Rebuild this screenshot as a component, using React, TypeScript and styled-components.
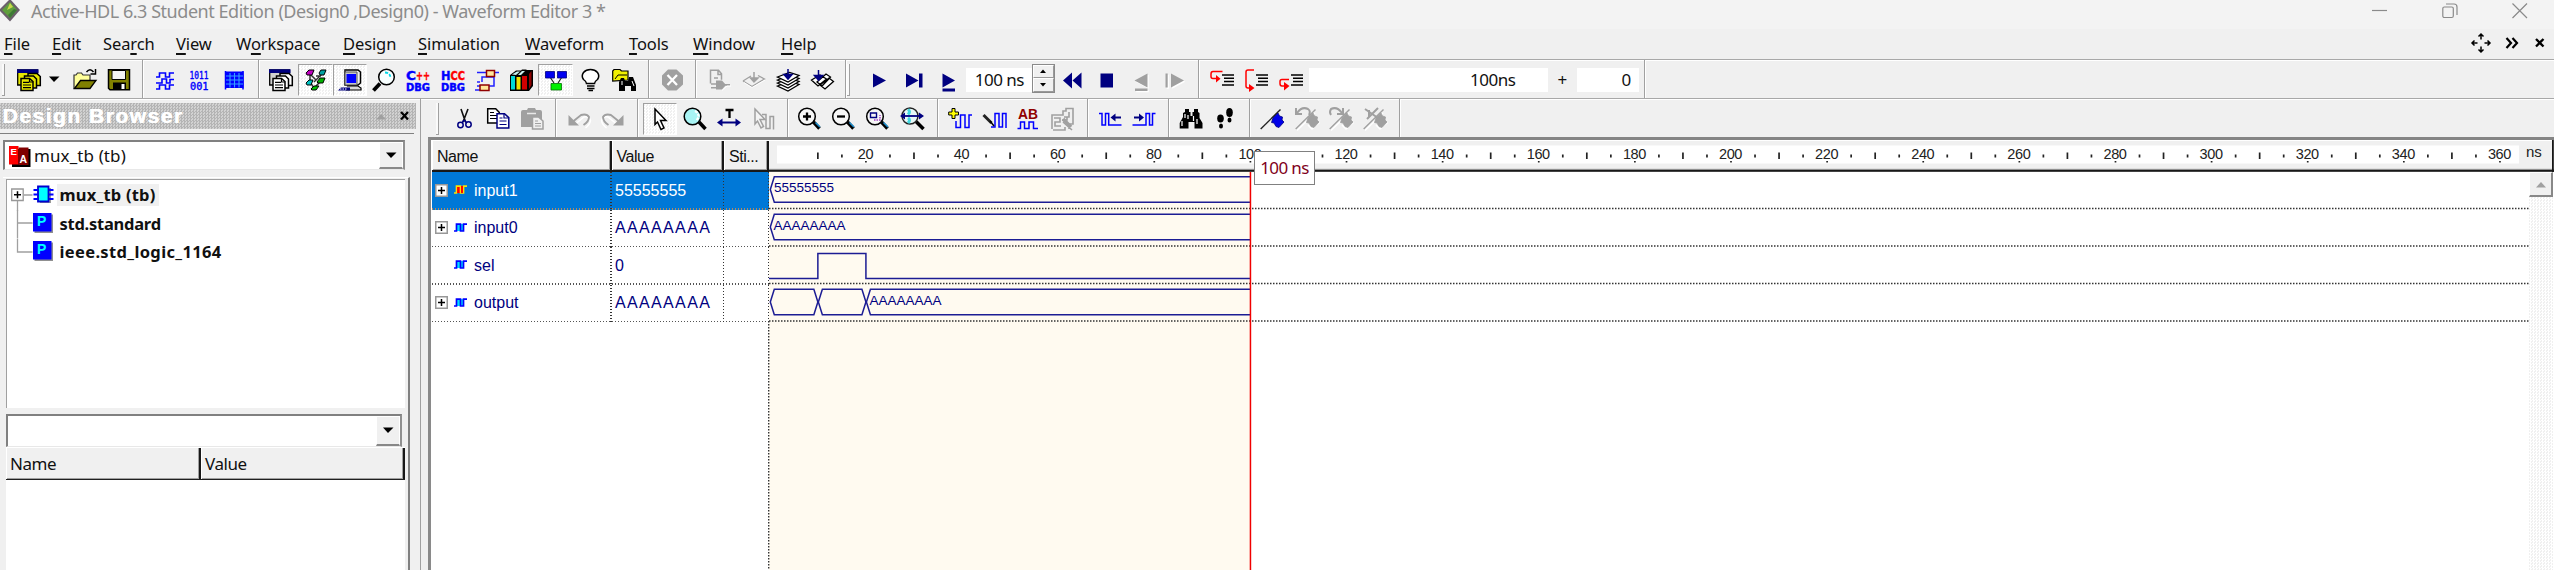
import React from "react";
import styled, { createGlobalStyle, css } from "styled-components";

const UI = `"Noto Sans", "Open Sans", sans-serif`;
const SANS = `"Liberation Sans", Arial, sans-serif`;
const NAVY = "#000080";
const WAVE = "#1c1c94";
const GRAY = "#a0a0a0";

const Global = createGlobalStyle`
  * { box-sizing: border-box; }
  body { margin: 0; background: #f0f0f0; overflow: hidden; }
  svg { display: block; flex: none; overflow: visible; }
`;

const Window = styled.div`
  width: 2554px;
  height: 570px;
  display: flex;
  flex-direction: column;
  background: #f0f0f0;
  font-family: ${UI};
  font-size: 17px;
  color: #111;
  overflow: hidden;
  white-space: pre;
`;

const TitleBar = styled.header`
  height: 29px;
  flex: none;
  display: flex;
  align-items: flex-start;
  background: #f3f3f3;
`;
const TitleText = styled.div`
  margin-left: 11px;
  flex: 1;
  line-height: 23px;
  font-size: 18px;
  letter-spacing: -0.46px;
  color: #8c8c8c;
`;
const WindowControls = styled.div`
  display: flex;
  gap: 54px;
  padding: 3px 26px 0 0;
`;

const MenuBar = styled.nav`
  height: 30px;
  flex: none;
  display: flex;
  padding-left: 4px;
`;
const MenuItem = styled.div<{ $w: number }>`
  width: ${(p) => p.$w}px;
  line-height: 29px;
  font-size: 16.5px;
  letter-spacing: -0.1px;
  u { text-underline-offset: 3px; text-decoration-thickness: 1.5px; }
`;
const MenuControls = styled.div`
  flex: 1;
  display: flex;
  justify-content: flex-end;
  align-items: flex-start;
  padding: 4px 7px 0 0;
  gap: 14px;
`;

const ToolBar = styled.div<{ $left: number }>`
  height: 39px;
  flex: none;
  display: flex;
  align-items: stretch;
  padding-left: ${(p) => p.$left}px;
  border-top: 1.5px solid #a8a8a8;
  box-shadow: inset 0 1px #fff;
`;
const Gripper = styled.i<{ $gap: number }>`
  width: 3px;
  flex: none;
  margin: 4px ${(p) => p.$gap}px 2px 0;
  border-right: 1.5px solid #a0a0a0;
  border-bottom: 1.5px solid #a0a0a0;
  background: #fafafa;
`;
const Group = styled.div<{ $pl?: number }>`
  display: flex;
  align-items: center;
  padding: 1px ${(p) => 10.8 - (p.$pl ?? 5.4)}px 0 ${(p) => p.$pl ?? 5.4}px;
  border-right: 1px solid #a0a0a0;
  box-shadow: 1px 0 #fff;
  margin-right: 1px;
`;
const dither = css`
  background: repeating-conic-gradient(#fff 0 25%, #f0f0f0 0 50%) 0 0 / 3px 3px;
`;
const ToolButton = styled.div<{ $pressed?: boolean; $w?: number }>`
  width: ${(p) => p.$w ?? 34.3}px;
  height: 32px;
  flex: none;
  display: flex;
  align-items: center;
  justify-content: center;
  ${(p) =>
    p.$pressed &&
    css`
      ${dither}
      border: 1.5px solid #fff;
      border-top-color: #a0a0a0;
      border-left-color: #a0a0a0;
    `}
`;
const Field = styled.div<{ $w: number; $pr: number; $ml?: number }>`
  width: ${(p) => p.$w}px;
  height: 24px;
  margin-left: ${(p) => p.$ml ?? 0}px;
  padding-right: ${(p) => p.$pr}px;
  background: #fff;
  text-align: right;
  line-height: 24px;
  font-size: 17px;
  letter-spacing: -0.5px;
`;
const Plus = styled.span`
  width: 29px;
  text-align: center;
  font-size: 17px;
`;
const Spin = styled.div`
  width: 23px;
  height: 29px;
  margin-top: -3px;
  border: 1.5px solid #8a8a8a;
  display: flex;
  flex-direction: column;
`;
const SpinHalf = styled.div`
  flex: 1;
  display: flex;
  align-items: center;
  justify-content: center;
  border: 1px solid #fff;
  border-right: 1.5px solid #999;
  border-bottom: 1.5px solid #999;
`;

const Body = styled.main`
  flex: 1;
  min-height: 0;
  display: flex;
`;
const Browser = styled.aside`
  width: 420px;
  flex: none;
  display: flex;
  flex-direction: column;
  border-top: 1.5px solid #a8a8a8;
  box-shadow: inset 0 1px #fff;
`;
const BrowserTitle = styled.div`
  height: 26px;
  margin-top: 4px;
  width: 416px;
  display: flex;
  align-items: center;
  padding: 0 5px 0 2.5px;
  background: repeating-conic-gradient(#b4b4b4 0 25%, #d2d2d2 0 50%) 0 0 / 3px 3px;
  font: bold 21px/26px ${SANS};
  letter-spacing: 1.5px;
  color: #fff;
`;
const BrowserTitleText = styled.span`
  flex: 1;
  text-shadow: 0.6px 0 #fff;
`;
const BrowserBody = styled.div`
  width: 414px;
  flex: 1;
  min-height: 0;
  display: flex;
  flex-direction: column;
  margin-top: 4px;
  padding: 6px 4px 0 3px;
  border-top: 1.5px solid #808080;
`;
const Combo = styled.div<{ $w: number; $h: number; $mt?: number }>`
  width: ${(p) => p.$w}px;
  height: ${(p) => p.$h}px;
  margin-top: ${(p) => p.$mt ?? 0}px;
  flex: none;
  display: flex;
  align-items: center;
  padding-left: 4px;
  background: #fff;
  border: 2.5px solid #808080;
  border-bottom: 1px solid #e8e8e8;
  border-right: 2px solid #909090;
`;
const ComboText = styled.span`
  flex: 1;
  padding-left: 3px;
  font-size: 17px;
  letter-spacing: 0.1px;
`;
const ComboButton = styled.div`
  width: 24px;
  align-self: stretch;
  display: flex;
  align-items: center;
  justify-content: center;
  background: #f0f0f0;
  border: 1px solid #fff;
  border-bottom: 2px solid #888;
`;
const Well = styled.div`
  margin-top: 7px;
  flex: 1;
  min-height: 0;
  width: 407px;
  padding-left: 3px;
  border-right: 2.5px solid #808080;
  border-top: 1px solid #fff;
`;
const Tree = styled.div`
  width: 399px;
  height: 229px;
  display: flex;
  flex-direction: column;
  background: #fff;
  border-top: 1.5px solid #a0a0a0;
  border-left: 1.5px solid #a0a0a0;
  padding: 2px 0 0 3px;
  margin-top: 1px;
`;
const TreeRow = styled.div`
  height: 28.4px;
  display: flex;
  align-items: center;
`;
const TreeLabel = styled.span<{ $selected?: boolean; $ls: number }>`
  height: 22px;
  margin: -2px 0 0 2.5px;
  padding: 0 3px;
  line-height: 22px;
  font-weight: bold;
  font-size: 16.5px;
  letter-spacing: ${(p) => p.$ls}px;
  background: ${(p) => (p.$selected ? "#f0f0f0" : "transparent")};
`;
const HeaderRow = styled.div`
  width: 399px;
  height: 33px;
  display: flex;
  border-bottom: 1.5px solid #202020;
  border-top: 1px solid #fff;
`;
const HeaderCell = styled.div<{ $w?: number; $sans?: boolean }>`
  ${(p) => (p.$w ? `width: ${p.$w}px;` : "flex: 1;")}
  padding-left: ${(p) => (p.$sans ? 4 : 3)}px;
  line-height: ${(p) => (p.$sans ? 31 : 32)}px;
  font-family: ${(p) => (p.$sans ? SANS : UI)};
  font-size: ${(p) => (p.$sans ? 16 : 17)}px;
  letter-spacing: -0.45px;
  background: #f0f0f0;
  border-right: 2px solid #181818;
  border-left: 1px solid #fff;
  box-shadow: inset -1px -1px #a0a0a0;
`;
const EmptyList = styled.div`
  width: 399px;
  height: 100px;
  background: #fff;
`;

const Main = styled.section`
  flex: 1;
  min-width: 0;
  display: flex;
  flex-direction: column;
  border-left: 1.5px solid #a0a0a0;
`;
const Document = styled.div`
  flex: 1;
  min-height: 0;
  margin-left: 7px;
  display: flex;
  border-left: 3px solid #8a8a8a;
  border-top: 3px solid #858585;
  background: #fff;
`;
const SignalTable = styled.div`
  width: 337px;
  margin-left: 1px;
  flex: none;
`;
const TableHead = styled.div`
  height: 32px;
  display: flex;
  border-top: 1px solid #fff;
  border-bottom: 2px solid #181818;
`;
const SignalRow = styled.div<{ $selected?: boolean }>`
  height: 37.5px;
  display: flex;
  font: 16px/35px ${SANS};
  color: ${(p) => (p.$selected ? "#fff" : NAVY)};
  background:
    linear-gradient(90deg, ${(p) => (p.$selected ? "#b08860" : "#555")} 50%, transparent 50%)
      0 100% / 3px 1.5px repeat-x,
    ${(p) => (p.$selected ? "#0078d7" : "#fff")};
`;
const Cell = styled.div<{ $w: number; $ls?: number; $pl?: number }>`
  width: ${(p) => p.$w}px;
  flex: none;
  display: flex;
  align-items: center;
  padding-left: ${(p) => p.$pl ?? 3}px;
  padding-bottom: 1.5px;
  letter-spacing: ${(p) => p.$ls ?? 0}px;
  background: linear-gradient(#333 50%, transparent 50%) 100% 0 / 1.5px 3px repeat-y;
`;
const Expander = styled.span<{ $hidden?: boolean }>`
  width: 13px;
  height: 13px;
  margin-right: 6px;
  visibility: ${(p) => (p.$hidden ? "hidden" : "visible")};
`;
const SignalName = styled.span`
  margin-left: 7px;
`;

const Chart = styled.div`
  flex: 1;
  min-width: 0;
  display: flex;
  flex-direction: column;
`;
const ChartBody = styled.div`
  flex: 1;
  min-height: 0;
  display: flex;
`;
const ScrollBar = styled.div`
  width: 24px;
  ${dither}
`;
const ScrollButton = styled.div`
  height: 25px;
  display: flex;
  align-items: center;
  justify-content: center;
  background: #f0f0f0;
  border: 1px solid #fff;
  border-right: 2px solid #888;
  border-bottom: 2px solid #888;
`;
const Tooltip = styled.div`
  position: absolute;
  left: 1254px;
  top: 151px;
  width: 61px;
  height: 34px;
  border: 1.5px solid #808080;
  background: #fff;
  color: #800020;
  font-size: 17px;
  line-height: 32px;
  text-align: center;
  letter-spacing: -0.6px;
`;

/* ---------- icons ---------- */
type Kids = { children?: React.ReactNode };
const Svg = ({ children, w = 24, h = 24 }: Kids & { w?: number; h?: number }) => (
  <svg width={w} height={h} viewBox={`0 0 ${w} ${h}`} fill="none" stroke="none" strokeWidth="1.5">
    {children}
  </svg>
);

const PageStack = ({ page, back }: { page: string; back: string }) => (
  <Svg>
    <path d="M.7 2H20.500V17H.7z" fill={back} stroke="#000" strokeWidth="1.3" />
    <path d="M0 1.300H21.500V5H0z" fill={NAVY} />
    <path d="M11 5.500h9l3.300 3v9H11z" fill={page} stroke="#000" />
    <path d="M7.500 8h9l3 3v9h-12z" fill={page} stroke="#000" />
    <path d="M4 10.500h8.500l3.500 3v9H4z" fill={page} stroke="#000" />
    <path d="M6 14.300h6M6 17h8M6 19.600h8M12.500 11v3H16" stroke="#000" strokeWidth="1.2" />
  </Svg>
);
const Open = () => (
  <Svg>
    <path d="M1 21V7h2l1.500-2h4L10 7h7v6" fill="#ffff9a" stroke="#333" strokeWidth="1.2" />
    <path d="M1.500 20.500L7.500 12.500H23L17 20.500z" fill="#808000" stroke="#000" strokeWidth="1.3" />
    <path d="M13.500 4Q17-.5 20.500 4M22.500 1v5h-5" stroke="#000" strokeWidth="1.5" />
  </Svg>
);
const Save = () => (
  <Svg>
    <path d="M1.500 1.800h21v20H3l-1.500-1.500z" fill="#808000" stroke="#000" strokeWidth="1.500" />
    <path d="M5 2.500h13.500v9H5z" fill="#f4f4f4" stroke="#000" strokeWidth="1" />
    <path d="M6 14.500h13V22H6z" fill="#000" />
    <path d="M14.500 16H17.500v5h-3z" fill="#fff" />
  </Svg>
);
const Waves = () => (
  <Svg>
    {[9, 15, 21].map((y, i) => (
      <path
        key={y}
        d={i === 1 ? `M3 ${y}h6v-4h4.500v4h3.500v-3.500h4` : `M3 ${y}h3.500v-4h6v4h4v-4h4.500`}
        stroke="#0000ff"
        strokeWidth="1.600"
      />
    ))}
  </Svg>
);
const Bits = () => (
  <Svg>
    <g fill="#0000ff" stroke="#0000ff" strokeWidth=".4" fontFamily="DejaVu Sans Mono" fontSize="10.500">
      <text x="2.500" y="11" textLength="19" lengthAdjust="spacingAndGlyphs">1011</text>
      <text x="3" y="21.500" textLength="18.500" lengthAdjust="spacingAndGlyphs">001</text>
    </g>
  </Svg>
);
const Grid = () => (
  <Svg>
    <path d="M3 3.500h18.500V20H3z" fill="#0000ff" />
    <path d="M3.500 3v18.500M21 3v18.500" stroke="#0000ff" />
    <path d="M8 5v14.500M12.500 5v14.500M17 5v14.500M4 8h17M4 12h17M4 16h17" stroke="#35a0ff" strokeWidth="1.100" />
  </Svg>
);
const Hierarchy = () => (
  <Svg>
    <path d="M6 6L12 12M18 6L10 14M6 6v8M12 8h5M17 13L10 20M6 14l4 6" stroke="#333" />
    <g stroke="#000" strokeWidth="1">
      <path d="M2 5l3-3h5L8 7H3z" fill="#c000c0" />
      <path d="M15 5l2-3h5l-2 5h-4z" fill="#00a0a0" />
      <path d="M2 15l3-3h4l-2 5H3z" fill="#00c0c0" />
      <path d="M13 14l3-4h5l-2 5h-5z" fill="#00b000" />
      <path d="M7 21l3-3h5l-3 4H8z" fill="#00c000" />
    </g>
  </Svg>
);
const Monitor = () => (
  <Svg>
    <path d="M7 2h13l2.500 2v11L20 17H7z" fill="#f0f0f0" stroke="#000" />
    <path d="M7 2v15h12V4H7" fill="#c8c8c8" stroke="#555" strokeWidth="1" />
    <path d="M8.500 6h9.500v9H8.500z" fill="#0000ff" />
    <path d="M9 18h11l3 2v2H8" fill="#d8d8d8" stroke="#000" strokeWidth="1.200" />
    <path d="M0 22.500l3-3h9v3z" fill={NAVY} />
    <path d="M2 21h7" stroke="#fff" strokeDasharray="1.500 1" strokeWidth="1" />
  </Svg>
);
const Magnifier = () => (
  <Svg>
    <path d="M1.500 22.500L8 15.500" stroke="#000" strokeWidth="3.800" />
    <circle cx="14.500" cy="9" r="7.800" fill="#f8ffff" stroke="#000" />
    <path d="M13 4.500q5 0 5.500 5" stroke="#00d8e8" strokeWidth="1.800" strokeDasharray="3 1.500" />
  </Svg>
);
const Dbg = ({ a, b, aw }: { a: string; b: string; aw: number }) => (
  <Svg>
    <g fontFamily="DejaVu Sans" fontWeight="bold">
      <text x="0" y="11.500" fontSize="12.500" fill="#0000ff" stroke="#0000ff" strokeWidth=".4" textLength={aw} lengthAdjust="spacingAndGlyphs">{a}</text>
      <text x={aw} y="11.500" fontSize="12.500" fill="#f00" stroke="#f00" strokeWidth=".4" textLength={24 - aw} lengthAdjust="spacingAndGlyphs">{b}</text>
      <text x="0" y="22.500" fontSize="11" fill="#0000ff" stroke="#0000ff" strokeWidth=".5" textLength="24" lengthAdjust="spacingAndGlyphs">DBG</text>
    </g>
  </Svg>
);
const Schematic = () => (
  <Svg>
    <path d="M2 4.500h22M15 9h4v9H2M2 14h3M15 9H7v5M0 22h7" stroke="#2020ff" />
    <path d="M11.500 2.500h8v6h-8zM5 17h9v5.500H5z" fill="#ffe79a" stroke="#900000" />
  </Svg>
);
const Books = () => (
  <Svg>
    <path d="M1 7l6-4.500h5l1-1h4l1 .500h6V18l-4 5H1z" fill="#000" />
    <path d="M2 8h4v13.500H2z" fill="#00d8d8" />
    <path d="M7.500 9h4v12.500h-4z" fill="#f0e000" />
    <path d="M13 8h5v13.500h-5z" fill="#d00000" />
    <path d="M20 6l2.500-3v14L20 21z" fill="#900000" />
    <path d="M3 6.500l5-3h3L7 7zM9 7l4-4h3l-4 4z" fill="#c8f0f0" />
  </Svg>
);
const Blocks = () => (
  <Svg>
    <path d="M6 9l4 6M18 9l-4 6" stroke="#222" strokeWidth="1.200" />
    <path d="M1.500 3.500h9V10h-9zM13.500 3.500h9V10h-9z" fill="#0000f0" stroke={NAVY} strokeWidth=".8" />
    <path d="M7 15.500h10.500v6.500H7z" fill="#00f000" stroke="#007000" strokeWidth=".8" />
  </Svg>
);
const Bulb = () => (
  <Svg>
    <path d="M8.500 15.500Q8.500 13.500 5.500 11.500 3 8 5.500 4.500 8 1.500 12.500 1.500T19.500 4.500Q22 8 19.500 11.500 16.500 13.500 16.500 15.500z" fill="#fff" stroke="#000" />
    <path d="M9 18h7.500M9 20.500h7.500M10.500 22.500h4.500" stroke="#000" />
  </Svg>
);
const FindFolder = () => (
  <Svg>
    <path d="M.7 13V3L2 1.500h6L9.500 3H16v9z" fill="#f0f000" stroke="#000" strokeWidth="1.200" />
    <path d="M3 11l3-4h9" stroke="#000" strokeWidth="1" />
    <path d="M7 23V14l2-4h3l1 3h3l1-4h4l3 8v6h-5v-5h-6v5z" fill="#000" />
    <path d="M10 13v4M20 13l2 5" stroke="#fff" strokeWidth="1" />
  </Svg>
);
const Cancel = () => (
  <Svg>
    <path d="M8 1.500h8.500l6.500 6v9l-6.500 6H8l-6-6v-9z" fill="#a0a0a0" />
    <path d="M7.500 7l9.500 10M17 7L7.500 17" stroke="#fff" strokeWidth="2.300" />
  </Svg>
);
const DocGate = () => (
  <Svg>
    <path d="M3.500 15.500V2.300h8l3 3.500v6M11 2v4.500h4M7 10h4" stroke={GRAY} />
    <path d="M9 12.500h6l4 4.500-4 4.500H9zM4 15.200h5v1.500H4zM4 19h5v1.500H4zM18 16h5v1.700h-5z" fill={GRAY} />
    <path d="M15 22.500l5-4.500h4" stroke="#fff" strokeWidth="1" />
  </Svg>
);
const GateGray = () => (
  <Svg>
    <path d="M1 13l8-5M1 13l9 5.500L22.500 11 16 7.500" stroke={GRAY} strokeWidth="1.300" />
    <path d="M2 14.500l8 5 13-7.500" stroke="#fff" strokeWidth="1" />
    <path d="M12 4v8M8.500 10l3.500 4 4-4z" stroke={GRAY} fill={GRAY} />
  </Svg>
);
const Layers = () => (
  <Svg>
    {[18, 15, 12, 9].map((y) => (
      <path key={y} d={`M1.500 ${y}l12-4.500 9.500 3-11 6.500z`} fill="#fff" stroke="#000" strokeWidth="1.300" />
    ))}
    <path d="M12 1v9M8 6.500h8L12 11z" fill={NAVY} stroke={NAVY} />
  </Svg>
);
const Layers2 = () => (
  <Svg>
    <path d="M10 17l9-7 4.500 3.500L15 21zM7 14l9-8 4.500 3L12 18zM1.500 12L10 7l6.500 4L8 18z" fill="#fff" stroke="#000" strokeWidth="1.300" />
    <path d="M8.500 2v9M4.500 7.500h8l-4 4.500z" fill={NAVY} stroke={NAVY} />
  </Svg>
);
const Shape = ({ d, fill = NAVY }: { d: string; fill?: string }) => (
  <Svg>
    {fill === GRAY && <path d={d} fill="#fff" transform="translate(1.200 1.200)" />}
    <path d={d} fill={fill} />
  </Svg>
);
const Step = ({ path, tip }: { path: string; tip: string }) => (
  <Svg>
    <path d={path} stroke="#f00" strokeWidth="1.500" />
    <path d={tip} fill="#f00" />
    <path d="M12 7h12M14 10.300h10M14 13.500h10M12 17h12" stroke="#000" strokeWidth="1.600" />
  </Svg>
);

const Cut = () => (
  <Svg>
    <path d="M9 2l4.500 13M16 2L11 15" stroke="#111" strokeWidth="1.600" />
    <circle cx="8.500" cy="18" r="2.700" stroke={NAVY} />
    <circle cx="16.500" cy="17.500" r="2.700" stroke={NAVY} />
    <path d="M12 13l-2 3M12.500 13l2 3" stroke={NAVY} />
  </Svg>
);
const Copy = () => (
  <Svg>
    <path d="M1.700 1.700h8l3.500 3.500V16H1.700z" fill="#fff" stroke="#000" />
    <path d="M4 5.500h4M4 8.500h7M4 11.500h7" stroke="#000" strokeWidth="1.200" />
    <path d="M11 6.700h7.500l4.300 4V21H11z" fill="#fff" stroke={NAVY} />
    <path d="M13.500 11h3M13.500 14h7M13.500 17.500h7M18 7v4h4.500" stroke={NAVY} strokeWidth="1.200" />
  </Svg>
);
const Paste = () => (
  <Svg>
    <path d="M1 5q0-2 2-2h4l1-2h7l1 2h4q2 0 2 2v15H1z" fill={GRAY} />
    <path d="M7 6.500h9" stroke="#e8e8e8" />
    <path d="M12.500 10h6l4.500 4v8H12.500z" fill="#f0f0f0" stroke={GRAY} />
    <path d="M15 14h3M15 16.500h6M15 19h6" stroke={GRAY} strokeWidth="1.100" />
  </Svg>
);
const Undo = ({ flip }: { flip?: boolean }) => (
  <Svg>
    <g transform={flip ? "translate(24 0) scale(-1 1)" : undefined}>
      <path d="M8 15L16 8.500q5-1 6.500 3.500-.5 4-5 7.500" stroke="#fff" transform="translate(1 1.500)" />
      <path d="M6 14.500L14 8q6-1.500 8 2 0 4.500-5.500 8" stroke={GRAY} strokeWidth="1.900" />
      <path d="M1.500 8v10.500H12z" fill={GRAY} />
    </g>
  </Svg>
);
const Pointer = () => (
  <Svg>
    <path d="M7 2l11 11.500h-5.500l3.500 7.500-3 1.500-3.500-7.500L7 17.500z" fill="#fff" stroke="#000" />
  </Svg>
);
const MagCyan = () => (
  <Svg>
    <path d="M16 15l6.500 7" stroke="#000" strokeWidth="3.500" />
    <circle cx="9.500" cy="9.500" r="8.300" fill="#a8f4f4" stroke="#000" />
    <path d="M12 4q4 2 3.500 6.500l-2 3" stroke="#fff" strokeWidth="2.300" strokeDasharray="3 1" />
  </Svg>
);
const Measure = () => (
  <Svg>
    <path d="M8.500 3h8M12.500 3v8" stroke="#000" strokeWidth="2.300" />
    <path d="M3 15.500h19" stroke={NAVY} strokeWidth="2" />
    <path d="M0 15.500l5.500-4v8zM24 15.500l-5.500-4v8z" fill={NAVY} />
  </Svg>
);
const PointerWave = () => (
  <Svg>
    <path d="M4 2l10 10.500H9l3.500 7L10 21l-3.500-7L4 17z" fill="#f4f4f4" stroke={GRAY} />
    <path d="M11 7.500h4v14h4v-12h3.500v13" stroke={GRAY} />
  </Svg>
);
const Zoom = ({ children }: Kids) => (
  <Svg>
    <path d="M16.500 15l6 6.500" stroke="#000" strokeWidth="3.500" />
    <path d="M18.500 15.500l4.500 4.500" stroke="#1b8fd0" strokeWidth="1.500" />
    <circle cx="10" cy="9.500" r="8.300" fill="#f6f6f6" stroke="#000" />
    {children}
  </Svg>
);
const ZoomRange = () => (
  <Svg>
    <path d="M16 14.500l7.500 7.500" stroke="#000" strokeWidth="3.500" />
    <circle cx="10" cy="9" r="8" fill="#e8f8f8" stroke="#222" />
    <path d="M8 2.500q3 2 0 5M8 11q3 2 0 5" stroke="#40d8e0" strokeWidth="3" />
    <path d="M2 9h20" stroke={NAVY} strokeWidth="1.800" />
    <path d="M0 9l5-3.500v7zM24 9l-5-3.500v7z" fill={NAVY} />
  </Svg>
);
const AddWave = () => (
  <Svg>
    <path d="M8 14v6.500h4.500V8h4.500v12.500h4V8H24" stroke="#0000ff" />
    <path d="M4 1.500h3v3.500h3.500v3H7v3.500H4V8H.7V5H4z" fill="#ff0" stroke="#000" strokeWidth="1" />
  </Svg>
);
const EditWave = () => (
  <Svg>
    <path d="M9 20h4V6.500h4V20h3.500V6.500H24V21" stroke="#0000ff" />
    <path d="M1.500 8l8 8" stroke="#222" strokeWidth="3" />
    <path d="M8 14l4 5" stroke="#000" />
  </Svg>
);
const ABWave = () => (
  <Svg>
    <text x="2" y="12" fontFamily="Liberation Sans" fontWeight="bold" fontSize="14.500" fill="#900000" textLength="20" lengthAdjust="spacingAndGlyphs">AB</text>
    <path d="M1.500 21.500h3v-6.500h4v6.500h4.500v-6.500h4.500v6.500H22" stroke="#0000ff" />
  </Svg>
);
const WaveTool = () => (
  <Svg>
    <path d="M1 22V8h11V4h3V1.500h7V17h-4v5M3 11h6v4H4v4h6M13 10h5V5M12 15l9 8M11 13h5v-3M14 20v3H2" stroke={GRAY} strokeWidth="1.600" />
    <path d="M12 12l8 8" stroke={GRAY} strokeWidth="3.500" />
  </Svg>
);
const EdgePrev = () => (
  <Svg>
    <path d="M1 6.500h3v11.500h3.500V6.500h3.200V18H23.500" stroke="#0000ff" />
    <path d="M15 10.500h8" stroke={NAVY} strokeWidth="2" />
    <path d="M12.500 10.500l5-4v8z" fill={NAVY} />
  </Svg>
);
const EdgeNext = () => (
  <Svg>
    <path d="M.5 18H14V6.500h3.500V18h3V6.500h3" stroke="#0000ff" />
    <path d="M2 10.500h6" stroke={NAVY} strokeWidth="2" />
    <path d="M12 10.500L7 6.500v8z" fill={NAVY} />
  </Svg>
);
const Binoculars = () => (
  <Svg>
    <path d="M6 2h4v3h1.500v4h2V5H15V2h4v3l1.500 1v5l3 5v5.500h-8V15h-6v6.500H.7V16L4 10V6l2-1z" fill="#000" />
    <path d="M6 7v4M3 14v5M14.500 9v5M9 8v4M18 12v5" stroke="#fff" strokeWidth="1.200" />
  </Svg>
);
const Feet = () => (
  <Svg>
    <ellipse cx="7.500" cy="11.500" rx="3.300" ry="4" fill="#000" />
    <ellipse cx="8" cy="19" rx="2" ry="2.500" fill="#000" />
    <ellipse cx="16.500" cy="5.500" rx="3.300" ry="4.500" fill="#000" />
    <ellipse cx="16.500" cy="13" rx="2" ry="2.500" fill="#000" />
  </Svg>
);
const Flag = ({ gray, mark }: { gray?: boolean; mark?: string }) => (
  <Svg>
    {gray && <path d="M2 23.500L20 6M13 18l4 4 7-6-3-4" stroke="#fff" />}
    <path d="M.7 22L20.500 2.500" stroke={gray ? GRAY : "#222"} strokeWidth="1.400" />
    <path d="M13 11l5-5 1.500 3 3 1-.5 3 2 2-5 5.500-3-1-2-3.500-2.500-.5z" fill={gray ? GRAY : "#0000e8"} stroke={gray ? GRAY : NAVY} strokeWidth=".8" />
    {mark && <path d={mark} stroke={GRAY} strokeWidth="2" />}
  </Svg>
);

const Caret = ({ color = "#000", up }: { color?: string; up?: boolean }) => (
  <Svg w={12} h={7}>
    <path d={up ? "M1 6.500L6 1l5 5.500z" : "M1 .500h10.500L6 6z"} fill={color} />
  </Svg>
);
const PlusBox = () => (
  <Svg w={13} h={13}>
    <path d="M.75.75h11.500v11.500H.75z" fill="#fff" stroke="#989898" />
    <path d="M3 6.500h7M6.500 3v7" stroke="#000" />
  </Svg>
);
const SignalIcon = ({ hot }: { hot?: boolean }) => (
  <Svg w={13} h={10}>
    <path d="M3 1h3.500v7H3zM7 1h2.500v7H7z" fill={hot ? "#f00" : "#00e0ff"} />
    <path d="M0 8h2.500V1.200h4V8h3V1.200H13" stroke={hot ? "#ffe000" : "#0000ff"} strokeWidth="1.700" />
    {hot && <path d="M4.200 2v6M8 1v7" stroke="#f00" strokeWidth="1.900" />}
  </Svg>
);

const TREE_LINE = "#a0a0a0";
const TreeJoint = ({ kind }: { kind: "first" | "mid" | "last" }) => (
  <Svg w={23} h={28.4}>
    {kind === "first" && (
      <>
        <path d="M7.500 19v10M14 13h8.500" stroke={TREE_LINE} strokeWidth="1.300" />
        <path d="M1.700 7h11.500v11.500H1.700z" fill="#fff" stroke="#989898" strokeWidth="1.300" />
        <path d="M4 12.700h7M7.500 9.200v7" stroke="#000" />
      </>
    )}
    {kind !== "first" && (
      <path d={kind === "mid" ? "M7.500 0v28.400M7.500 13h15" : "M7.500 0v13h15"} stroke={TREE_LINE} strokeWidth="1.300" />
    )}
  </Svg>
);
const ChipIcon = () => (
  <Svg w={21} h={26}>
    <path d="M7 5h11v15H7z" fill="#999" />
    <path d="M5 3.500h10.500v15H5z" fill="#00ffff" stroke="#0000d0" strokeWidth="1.800" />
    <path d="M.5 7H5M.5 11.500H5M.5 16H5M16 7h4.500M16 11.500h4.500M16 16h4.500" stroke="#0000ff" strokeWidth="1.800" />
  </Svg>
);
const PackageIcon = () => (
  <Svg w={21} h={26}>
    <path d="M1.500 2.500h18.500V21H1.500z" fill="#909090" />
    <path d="M0 1h18.500v18.500H0z" fill="#0000ff" />
    <text x="4" y="14" fontFamily="Liberation Sans" fontWeight="bold" fontSize="14" fill="#00ffff">P</text>
  </Svg>
);
const EntityIcon = () => (
  <Svg w={22} h={22}>
    <path d="M3 4H21.500V22H3z" fill="#000" />
    <path d="M0 1h9.500v18.500H0z" fill="#ff0000" />
    <path d="M9.500 2.500h10v17.500H9.500z" fill="#800000" />
    <g fill="#fff" fontFamily="Liberation Sans" fontWeight="bold">
      <text x="1.500" y="10" fontSize="9.500">E</text>
      <text x="10.500" y="18" fontSize="10.500">A</text>
    </g>
  </Svg>
);

/* ---------- chart ---------- */
const NS = 4.806;
const X0 = 0.8;
const W = 1786;
const x = (ns: number) => X0 + ns * NS;

const bus = (from: number, to: number, top: number, openEnd?: boolean) => {
  const a = x(from);
  const b = x(to);
  const bot = top + 25.5;
  const mid = top + 12.7;
  return openEnd
    ? `M${b} ${top}H${a + 4.5}L${a + 0.5} ${mid}L${a + 4.5} ${bot}H${b}`
    : `M${a + 0.5} ${mid}L${a + 4.5} ${top}H${b - 4}L${b} ${mid}L${b - 4} ${bot}H${a + 4.5}z`;
};

const MARKS = Array.from({ length: 71 }, (_, i) => 10 + i * 5);
const tick = (ns: number) => {
  if (ns % 20 === 0) return `M${x(ns)} 21v1.500`;
  return ns % 10 === 0 ? `M${x(ns)} 12.500v6.500` : `M${x(ns)} 14.500v3`;
};

const Ruler = () => (
  <svg width={W} height={32} viewBox={`0 0 ${W} 32`}>
    <rect width={W} height={32} fill="#f0f0f0" />
    <rect width={W} height="1" fill="#fff" />
    <rect x="8" y="5.500" width="1742" height="18" fill="#fff" />
    <g fill="#222" fontFamily="Liberation Sans" fontSize="14.500">
      {MARKS.filter((ns) => ns % 20 === 0).map((ns) => (
        <text key={ns} x={x(ns) - 0.5} y={18.7} textAnchor="middle" letterSpacing="-.4">{ns}</text>
      ))}
      <text x="1757" y="16.500" fontSize="15">ns</text>
    </g>
    <path d={MARKS.map(tick).join("")} stroke="#222" strokeWidth="1.700" />
    <rect y="28.800" width={W} height="1" fill="#a0a0a0" />
    <rect y="29.800" width={W} height="2" fill="#181818" />
    <rect x="1783" width="1.800" height="32" fill="#181818" />
  </svg>
);

const Waveforms = () => (
  <svg width={1760} height={398} viewBox="0 0 1760 398">
    <rect width="1760" height="398" fill="#fff" />
    <rect width="481.500" height="398" fill="#fffaf0" />
    <g stroke="#333" strokeWidth="1.400" strokeDasharray="1.500 1.500">
      {[36.5, 74, 111.500, 149].map((y) => (
        <path key={y} d={`M0 ${y}H1760`} />
      ))}
      <path d="M-.3 149V398" />
    </g>
    <g fill="none" stroke={WAVE} strokeWidth="1.500">
      <path d={bus(0, 100, 4.8, true)} />
      <path d={bus(0, 100, 42.3, true)} />
      <path d={`M0 106.500H${x(10)}V81.500H${x(20)}V106.500H${x(100)}`} />
      <path d={bus(0, 10, 117.3)} />
      <path d={bus(10, 20, 117.3)} />
      <path d={bus(20, 100, 117.3, true)} />
    </g>
    <g fill={NAVY} fontFamily="Liberation Sans" fontSize="13.500">
      <text x="5" y="20">55555555</text>
      <text x="4.500" y="57.500">AAAAAAAA</text>
      <text x="100.500" y="132.500">AAAAAAAA</text>
    </g>
    <rect x="480.700" width="1.500" height="398" fill="#f00000" />
  </svg>
);

const MENU: [string, string, string, number][] = [
  ["", "F", "ile", 48],
  ["", "E", "dit", 51],
  ["Sea", "r", "ch", 73],
  ["", "V", "iew", 60],
  ["W", "o", "rkspace", 107],
  ["", "D", "esign", 75],
  ["", "S", "imulation", 107],
  ["", "W", "aveform", 104],
  ["", "T", "ools", 64],
  ["", "W", "indow", 88],
  ["", "H", "elp", 50],
];

const SIGNALS = [
  { name: "input1", value: "55555555", bus: true },
  { name: "input0", value: "AAAAAAAA", bus: true },
  { name: "sel", value: "0", bus: false },
  { name: "output", value: "AAAAAAAA", bus: true },
];

type Tool = React.ReactElement | { on: React.ReactElement };
const Tools = ({ items }: { items: Tool[] }) => (
  <>
    {items.map((t, i) =>
      "on" in t ? (
        <ToolButton key={i} $pressed>{t.on}</ToolButton>
      ) : (
        <ToolButton key={i}>{t}</ToolButton>
      )
    )}
  </>
);

export default function App() {
  return (
    <Window>
      <Global />
      <TitleBar>
        <Svg w={20} h={22}>
          <path d="M10-1L20 10 10 21.500-1 10z" fill="#6b5f6b" />
          <path d="M10 2l7 8-7 8-8-8z" fill="#5f9e3c" />
          <path d="M10 3l3 4-6 3z" fill="#c9d84a" />
          <path d="M10 18l7-8-3-1-6 6z" fill="#3e7a35" />
        </Svg>
        <TitleText>Active-HDL 6.3 Student Edition (Design0 ,Design0) - Waveform Editor 3 *</TitleText>
        <WindowControls>
          <Svg w={16} h={16}><path d="M0 7.500h15" stroke="#8a8a8a" strokeWidth="1.200" /></Svg>
          <Svg w={16} h={16}>
            <rect x=".8" y="4" width="10.500" height="10.500" rx="1.500" stroke="#8a8a8a" strokeWidth="1.200" />
            <path d="M4 1h8q3 0 3 3v8" stroke="#8a8a8a" strokeWidth="1.200" />
          </Svg>
          <Svg w={16} h={16}><path d="M.5.5l14.500 14.500M15 .5L.5 15" stroke="#8a8a8a" strokeWidth="1.200" /></Svg>
        </WindowControls>
      </TitleBar>
      <MenuBar>
        {MENU.map(([a, u, b, w]) => (
          <MenuItem key={a + u + b} $w={w}>{a}<u>{u}</u>{b}</MenuItem>
        ))}
        <MenuControls>
          <Svg w={20} h={20}>
            <path d="M10 1v5.500M10 13.500V19M1 10h5.500M13.500 10H19M7.500 3.500L10 1l2.500 2.500M7.500 16.500L10 19l2.500-2.500M3.500 7.500L1 10l2.500 2.500M16.500 7.500L19 10l-2.500 2.500" stroke="#000" strokeWidth="1.500" />
          </Svg>
          <Svg w={14} h={20}><path d="M1.500 5l4.500 5-4.500 5M7.500 5l4.500 5-4.500 5" stroke="#000" strokeWidth="2.200" /></Svg>
          <Svg w={14} h={20}><path d="M3 6l7.500 7.500M10.500 6L3 13.500" stroke="#000" strokeWidth="2.300" /></Svg>
        </MenuControls>
      </MenuBar>

      <ToolBar $left={2}>
        <Gripper $gap={6.5} />
        <Group>
          <ToolButton $w={24}><PageStack page="#e8e800" back="#e8e800" /></ToolButton>
          <ToolButton $w={27}><Caret /></ToolButton>
          <Tools items={[<Open />, <Save />]} />
        </Group>
        <Group $pl={4}><Tools items={[<Waves />, <Bits />, <Grid />]} /></Group>
        <Group $pl={4.5}>
          <Tools
            items={[
              <PageStack page="#fff" back="#d0d0d0" />,
              { on: <Hierarchy /> },
              { on: <Monitor /> },
              <Magnifier />,
              <Dbg a="C" b="++" aw={10} />,
              <Dbg a="H" b="CC" aw={9.5} />,
              <Schematic />,
              <Books />,
              { on: <Blocks /> },
              <Bulb />,
              <FindFolder />,
            ]}
          />
        </Group>
        <Group><Tools items={[<Cancel />]} /></Group>
        <Group><Tools items={[<DocGate />, <GateGray />, <Layers />, <Layers2 />]} /></Group>
        <Gripper $gap={7} />
        <Group>
          <Tools
            items={[
              <Shape d="M6 5.500v14L19 12.500z" />,
              <Shape d="M4 5.500v14L16.500 12.500zM17 5.500h3.500v14H17z" />,
              <Shape d="M6.500 5.500v14L19 12.500zM6.500 20.500H19v3H6.500z" />,
            ]}
          />
          <Field $w={66} $pr={8} $ml={1}>100 ns</Field>
          <Spin>
            <SpinHalf><Svg w={6} h={4}><path d="M0 4l3-3.500L6 4z" fill="#000" /></Svg></SpinHalf>
            <SpinHalf><Svg w={6} h={4}><path d="M0 0h6L3 3.500z" fill="#000" /></Svg></SpinHalf>
          </Spin>
          <Tools
            items={[
              <Shape d="M12 4.500v16L3 12.500zM21.500 4.500v16l-9-8z" />,
              <Shape d="M6.500 5.500H19v14H6.500z" />,
              <Shape fill={GRAY} d="M18.500 5.500v14L5.500 12.500zM6 20.500H18.500v2.500H6z" />,
              <Shape fill={GRAY} d="M2.500 5.500h2.200v14H2.500zM8 5.500v14L21 12.500z" />,
            ]}
          />
        </Group>
        <Group>
          <Tools
            items={[
              <Step path="M12.500 3.500H3Q1 3.500 1 6v2.500q0 2 2 2h4" tip="M6 7l4.500 3.700L6 14.500z" />,
              <Step path="M10 2H4Q2 2 2 4v14q0 2 2 2h2" tip="M5 16l5.500 4L5 24z" />,
              <Step path="M10 11.500H3Q1 11.500 1 13.500v2q0 2.500 2 2.500h3" tip="M5 14l5.500 4L5 22.500z" />,
            ]}
          />
          <Field $w={239} $pr={32.5} $ml={1}>100ns</Field>
          <Plus>+</Plus>
          <Field $w={62} $pr={8}>0</Field>
        </Group>
      </ToolBar>

      <Body>
        <Browser>
          <BrowserTitle>
            <BrowserTitleText>Design Browser</BrowserTitleText>
            <Caret up color={GRAY} />
            <Svg w={24} h={12}><path d="M14 2l7 7.500M21 2l-7 7.500" stroke="#000" strokeWidth="2.300" /></Svg>
          </BrowserTitle>
          <BrowserBody>
            <Combo $w={402} $h={30}>
              <EntityIcon />
              <ComboText>mux_tb (tb)</ComboText>
              <ComboButton><Caret /></ComboButton>
            </Combo>
            <Well>
              <Tree>
                <TreeRow>
                  <TreeJoint kind="first" /><ChipIcon />
                  <TreeLabel $selected $ls={0.2}>mux_tb (tb)</TreeLabel>
                </TreeRow>
                <TreeRow>
                  <TreeJoint kind="mid" /><PackageIcon />
                  <TreeLabel $ls={-0.25}>std.standard</TreeLabel>
                </TreeRow>
                <TreeRow>
                  <TreeJoint kind="last" /><PackageIcon />
                  <TreeLabel $ls={0.35}>ieee.std_logic_1164</TreeLabel>
                </TreeRow>
              </Tree>
              <Combo $w={396} $h={33} $mt={6}>
                <ComboText />
                <ComboButton><Caret /></ComboButton>
              </Combo>
              <HeaderRow>
                <HeaderCell $w={195}>Name</HeaderCell>
                <HeaderCell>Value</HeaderCell>
              </HeaderRow>
              <EmptyList />
            </Well>
          </BrowserBody>
        </Browser>

        <Main>
          <ToolBar $left={15}>
            <Gripper $gap={2.5} />
            <Group $pl={5}><Tools items={[<Cut />, <Copy />, <Paste />]} /></Group>
            <Group $pl={4.5}><Tools items={[<Undo />, <Undo flip />]} /></Group>
            <Group $pl={4.5}><Tools items={[{ on: <Pointer /> }, <MagCyan />, <Measure />, <PointerWave />]} /></Group>
            <Group $pl={3}>
              <Tools
                items={[
                  <Zoom><path d="M6 9.500h8M10 5.500v8" stroke="#000" strokeWidth="2.300" /></Zoom>,
                  <Zoom><path d="M6 9.500h8" stroke="#000" strokeWidth="2.300" /></Zoom>,
                  <Zoom>
                    <path d="M5.500 6h6v4.500h-6z" stroke={NAVY} strokeWidth="1.400" />
                    <path d="M9 13h6V8" stroke="#a040c0" strokeDasharray="1.500 1" />
                  </Zoom>,
                  <ZoomRange />,
                ]}
              />
            </Group>
            <Group $pl={4}><Tools items={[<AddWave />, <EditWave />, <ABWave />, <WaveTool />]} /></Group>
            <Group $pl={4}><Tools items={[<EdgePrev />, <EdgeNext />]} /></Group>
            <Group $pl={4}><Tools items={[<Binoculars />, <Feet />]} /></Group>
            <Group $pl={4}>
              <Tools
                items={[
                  <Flag />,
                  <Flag gray mark="M1 1v6h6M2 6q5-7 11-4 3 2 1 6" />,
                  <Flag gray mark="M14 1v6H8M13 6Q8-1 2 2 0 5 2 8" />,
                  <Flag gray mark="M2 2l13 9M15 1L4 12M6 3v7" />,
                ]}
              />
            </Group>
          </ToolBar>
          <Document>
            <SignalTable>
              <TableHead>
                <HeaderCell $sans $w={179.5}>Name</HeaderCell>
                <HeaderCell $sans $w={112.5}>Value</HeaderCell>
                <HeaderCell $sans>Sti...</HeaderCell>
              </TableHead>
              {SIGNALS.map((s, i) => (
                <SignalRow key={s.name} $selected={i === 0}>
                  <Cell $w={179.5}>
                    <Expander $hidden={!s.bus}><PlusBox /></Expander>
                    <SignalIcon hot={i === 0} />
                    <SignalName>{s.name}</SignalName>
                  </Cell>
                  <Cell $w={112.5} $pl={3.5} $ls={s.value[0] === "A" ? 1.35 : 0}>{s.value}</Cell>
                  <Cell $w={45} />
                </SignalRow>
              ))}
            </SignalTable>
            <Chart>
              <Ruler />
              <ChartBody>
                <Waveforms />
                <ScrollBar><ScrollButton><Caret up color={GRAY} /></ScrollButton></ScrollBar>
              </ChartBody>
            </Chart>
          </Document>
        </Main>
      </Body>
      <Tooltip>100 ns</Tooltip>
    </Window>
  );
}
